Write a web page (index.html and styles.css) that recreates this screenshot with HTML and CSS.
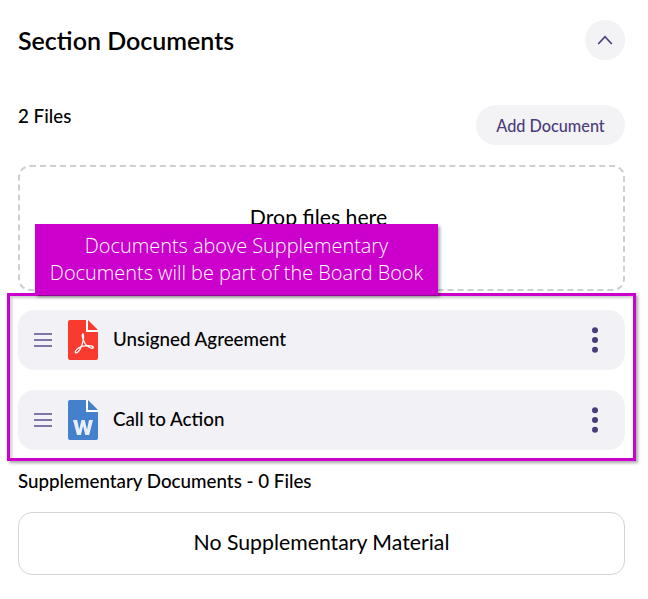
FILE: index.html
```html
<!DOCTYPE html>
<html lang="en">
<head>
<meta charset="utf-8">
<title>Section Documents</title>
<link rel="stylesheet" href="styles.css">
</head>
<body>
<main class="page">
  <header class="head">
    <h1 class="title">Section Documents</h1>
    <button class="round-btn" aria-label="Collapse">
      <svg width="16" height="10" viewBox="0 0 16 10" fill="none"><path d="M1.2 9 8 1.6 14.8 9" stroke="#4b3d7d" stroke-width="1.6"/></svg>
    </button>
  </header>
  <div class="files-row">
    <span class="count">2 Files</span>
    <button class="add-btn">Add Document</button>
  </div>
  <div class="drop"><span class="drop-text">Drop files here</span></div>
  <ul class="list">
    <li class="row">
      <svg class="drag" width="18" height="14" viewBox="0 0 18 14" fill="none" stroke="#5a4d8c" stroke-width="1.5"><path d="M0 1h18M0 7h18M0 13h18"/></svg>
      <svg class="file" width="30" height="40" viewBox="0 0 30 40"><path d="M2 0h16v12h12v26a2 2 0 0 1-2 2H2a2 2 0 0 1-2-2V2a2 2 0 0 1 2-2z" fill="#f93a2f"/><path d="M18 0h2v10h10v2H18z" fill="#fff"/><path d="M20 0l10 10H20z" fill="#f93a2f"/><path d="M14.500 14c-1 1.500 1 7 2.500 9.500 2 3 6.500 5.500 8 4.500s-1.500-3-8-2.200c-4 .5-8 2.700-9.500 5.200-1 2 1.200 2.500 3 .5 2.500-2.700 5-10 5-14.500 0-2.500-.7-3.500-1-3z" fill="none" stroke="#fff" stroke-width="1.300"/></svg>
      <span class="name">Unsigned Agreement</span>
      <svg class="more" width="8" height="26" viewBox="0 0 8 26" fill="#4b3d7d"><circle cx="4" cy="3.200" r="3"/><circle cx="4" cy="13" r="3"/><circle cx="4" cy="22.800" r="3"/></svg>
    </li>
    <li class="row">
      <svg class="drag" width="18" height="14" viewBox="0 0 18 14" fill="none" stroke="#5a4d8c" stroke-width="1.5"><path d="M0 1h18M0 7h18M0 13h18"/></svg>
      <svg class="file" width="30" height="40" viewBox="0 0 30 40"><path d="M2 0h16v12h12v26a2 2 0 0 1-2 2H2a2 2 0 0 1-2-2V2a2 2 0 0 1 2-2z" fill="#4480cc"/><path d="M18 0h2v10h10v2H18z" fill="#fff"/><path d="M20 0l10 10H20z" fill="#4480cc"/><path d="M5 20h4.200l2 9.500 2.300-9.500h3.200l2.300 9.500 2-9.500H25l-3.800 15h-3.900l-2.200-9-2.200 9H9z" fill="#e8eef8"/></svg>
      <span class="name">Call to Action</span>
      <svg class="more" width="8" height="26" viewBox="0 0 8 26" fill="#4b3d7d"><circle cx="4" cy="3.200" r="3"/><circle cx="4" cy="13" r="3"/><circle cx="4" cy="22.800" r="3"/></svg>
    </li>
  </ul>
  <p class="supp-title">Supplementary Documents - 0 Files</p>
  <div class="empty">No Supplementary Material</div>
  <div class="frame"></div>
  <div class="callout">Documents above Supplementary<br>Documents will be part of the Board Book</div>
</main>
</body>
</html>
```
FILE: styles.css
```css
* { box-sizing: border-box; }
html, body { margin: 0; padding: 0; background: #fff; }
body { font-family: Lato, "Liberation Sans", sans-serif; color: #000; }
.page { position: relative; width: 648px; height: 599px; padding: 20px 23px 0 18px; overflow: hidden; }
.head { display: flex; justify-content: space-between; align-items: center; height: 40px; }
.title { margin: 0; font-size: 25px; font-weight: 600; line-height: 42px; }
.round-btn { width: 40px; height: 40px; border: 0; border-radius: 50%; background: #f3f2f5; padding: 0; display: flex; align-items: center; justify-content: center; }
.files-row { display: flex; justify-content: space-between; align-items: flex-start; margin-top: 45px; height: 40px; }
.count { font-size: 18.75px; font-weight: 500; line-height: 22px; }
.add-btn { height: 40px; width: 149px; border: 0; border-radius: 20px; background: #f3f2f5; color: #4b3d7d; font: 500 16.25px Lato, sans-serif; padding: 0; }
.drop { margin-top: 20px; height: 126px; border: 2px dashed #cfcfd3; border-radius: 12px; display: flex; justify-content: center; padding: 38px 6px 0 0; }
.drop-text { font-size: 21.25px; line-height: 24px; }
.list { list-style: none; margin: 19px 0 0; padding: 0; display: flex; flex-direction: column; gap: 20px; }
.row { display: flex; align-items: center; height: 60px; background: #f2f1f6; border-radius: 16px; padding: 0 26px 0 16px; }
.file { margin-left: 16px; flex: none; }
.name { margin-left: 15px; flex: 1; font-size: 18.75px; font-weight: 500; line-height: 20px; padding-bottom: 2px; }
.supp-title { margin: 20px 0 0; font-size: 18.75px; font-weight: 500; line-height: 22px; }
.empty { margin-top: 20px; height: 63px; border: 1px solid #d4d4d8; border-radius: 14px; display: flex; align-items: center; justify-content: center; font-size: 21.25px; line-height: 24px; padding-bottom: 3px; }
.frame { position: absolute; left: 7px; top: 293px; width: 629px; height: 168px; border: 3px solid #cc00cc; box-shadow: 2px 2px 3px rgba(0,0,0,.35), inset 2px 2px 3px rgba(0,0,0,.2); }
.callout { position: absolute; left: 35px; top: 224px; width: 403px; height: 71px; padding-top: 8px; background: #cc00cc; color: #fff; text-align: center; font-family: "Open Sans", sans-serif; font-size: 19.9px; font-weight: 300; line-height: 27px; box-shadow: 2px 2px 3px rgba(0,0,0,.35); }
```
